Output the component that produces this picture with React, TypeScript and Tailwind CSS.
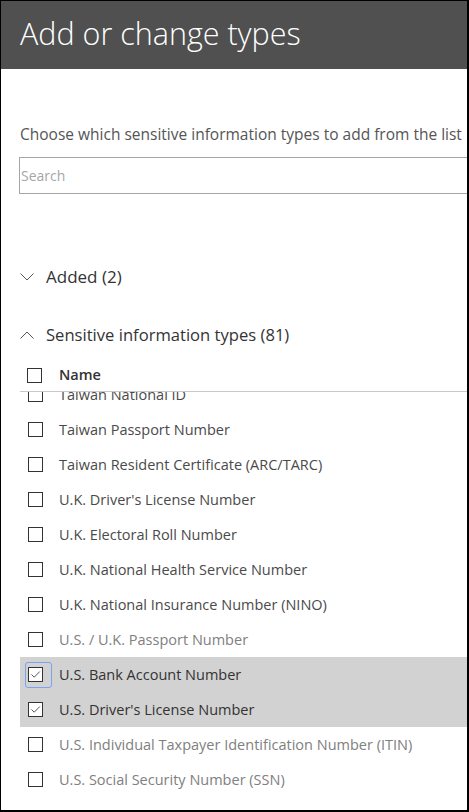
import React from 'react';

type Row = { label: string; checked?: boolean; focused?: boolean; muted?: boolean };

const rows: Row[] = [
	{ label: 'Taiwan National ID' },
	{ label: 'Taiwan Passport Number' },
	{ label: 'Taiwan Resident Certificate (ARC/TARC)' },
	{ label: "U.K. Driver's License Number" },
	{ label: 'U.K. Electoral Roll Number' },
	{ label: 'U.K. National Health Service Number' },
	{ label: 'U.K. National Insurance Number (NINO)' },
	{ label: 'U.S. / U.K. Passport Number', muted: true },
	{ label: 'U.S. Bank Account Number', checked: true, focused: true },
	{ label: "U.S. Driver's License Number", checked: true },
	{ label: 'U.S. Individual Taxpayer Identification Number (ITIN)', muted: true },
	{ label: 'U.S. Social Security Number (SSN)', muted: true },
];

const Checkbox = ({ checked }: { checked?: boolean }) => (
	<span className="flex h-[15px] w-[15px] shrink-0 items-center justify-center border border-[#333333] bg-white">
		{checked && (
			<svg width="11" height="9" viewBox="0 0 11 9" fill="none">
				<path d="M1.5 4.5 L4.2 7.2 L9.8 1.5" stroke="#555555" strokeWidth="1" />
			</svg>
		)}
	</span>
);

const Chevron = ({ up }: { up?: boolean }) => (
	<svg width="14" height="8" viewBox="0 0 14 8" fill="none" className="shrink-0">
		<path
			d={up ? 'M0.5 7.5 L7 1 L13.5 7.5' : 'M0.5 0.5 L7 7 L13.5 0.5'}
			stroke="#555555"
			strokeWidth="1"
		/>
	</svg>
);

export default function App() {
	return (
		<div
			className="h-[812px] w-[469px] overflow-hidden border-t border-l border-r-2 border-b-2 border-black bg-white"
			style={{ fontFamily: '"Open Sans", "Noto Sans", sans-serif' }}>
			<div className="flex h-[68px] items-center bg-[#505050] pb-[3px] pl-[19px]">
				<h1 className="text-[30.5px] font-light leading-none text-white">Add or change types</h1>
			</div>

			<p className="mt-[55px] whitespace-nowrap pl-[19px] text-[15.5px] leading-[20px] text-[#555555]">
				Choose which sensitive information types to add from the list
			</p>

			<div className="ml-[18px] mt-[13px] flex h-[37px] items-center border border-r-0 border-[#a6a6a6] pl-[1px]">
				<span className="text-[14px] text-[#a6a6a6]">Search</span>
			</div>

			<div className="mt-[72px] flex items-center gap-[12px] pl-[19px] text-[17px] leading-[22px] text-[#333333]">
				<Chevron />
				<span>Added (2)</span>
			</div>

			<div className="mt-[36px] flex items-center gap-[12px] pl-[19px] text-[16.6px] leading-[22px] text-[#333333]">
				<Chevron up />
				<span>Sensitive information types (81)</span>
			</div>

			<div className="mt-[19px] flex h-[20px] items-center pl-[26px] text-[14.5px] font-semibold text-[#333333]">
				<Checkbox />
				<span className="ml-[17px]">Name</span>
			</div>

			<div className="ml-[19px] mt-[6px] h-px bg-[#c8c8c8]" />

			<div className="h-[420px] overflow-hidden">
				<div className="-mt-[15px]">
					{rows.map((r) => (
						<div
							key={r.label}
							className={`relative flex h-[35px] items-center pl-[8px] ml-[19px] ${r.checked ? 'bg-[#d2d2d2]' : ''}`}>
							{r.focused && (
								<span className="absolute left-[5px] top-[5px] h-[26px] w-[27px] rounded-[3px] border border-[#7aa3f0]" />
							)}
							<Checkbox checked={r.checked} />
							<span
								className={`ml-[16px] whitespace-nowrap text-[14.5px] ${
									r.checked ? 'text-[#333333]' : r.muted ? 'text-[#808080]' : 'text-[#4a4a4a]'
								}`}>
								{r.label}
							</span>
						</div>
					))}
				</div>
			</div>
		</div>
	);
}
